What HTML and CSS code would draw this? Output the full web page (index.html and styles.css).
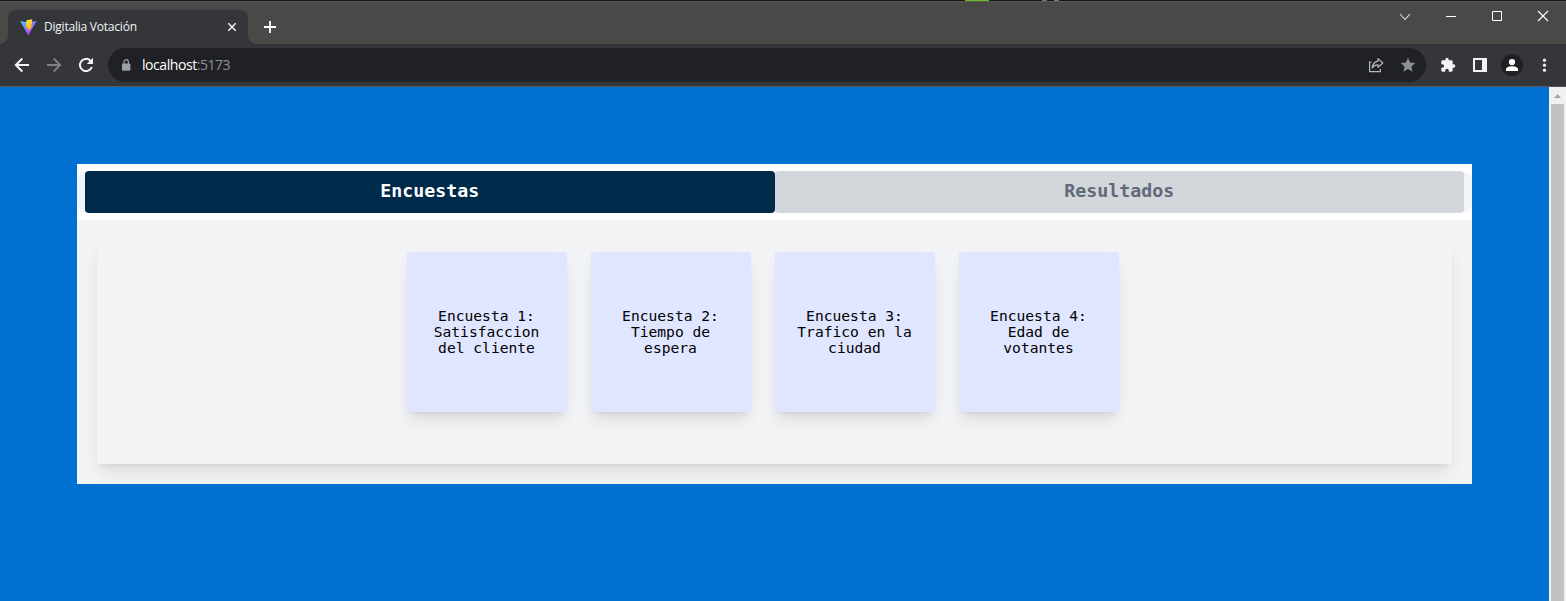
FILE: index.html
```html
<!DOCTYPE html>
<html lang="es">
<head>
<meta charset="utf-8">
<title>Digitalia Votación</title>
<link rel="stylesheet" href="styles.css">
</head>
<body>
<div class="browser">
  <div class="edge"><i class="edge-green"></i><i class="edge-dot"></i><i class="edge-dot edge-dot-last"></i></div>
  <header class="titlebar">
    <div class="browser-tab">
      <svg class="favicon" width="17" height="17" viewBox="0 0 17 17">
        <defs>
          <linearGradient id="v" x1="0" y1="0" x2=".6" y2="1"><stop offset="0" stop-color="#41d1ff"/><stop offset="1" stop-color="#bd34fe"/></linearGradient>
          <linearGradient id="b" x1="0" y1="0" x2="0" y2="1"><stop offset="0" stop-color="#ffe14a"/><stop offset="1" stop-color="#ffa800"/></linearGradient>
        </defs>
        <path d="M0 2 8.5 3.4 16.5 2 8.3 16.5Z" fill="url(#v)"/>
        <path d="M12.2 .2 6.4 1.2 5.8 8.6 7.8 8.2 7.4 10.4 8.8 10.2 8.2 13 12.6 6.2 10.8 6.4 12 4Z" fill="url(#b)"/>
      </svg>
      <span class="tab-title">Digitalia Votación</span>
      <svg class="tab-close" width="10" height="10" viewBox="0 0 10 10"><path d="M1.3 1.3 8.7 8.7M8.7 1.3 1.3 8.7" stroke="#f1f1f1" stroke-width="1.5"/></svg>
    </div>
    <svg class="new-tab" width="14" height="14" viewBox="0 0 14 14"><path d="M7 1V13M1 7H13" stroke="#fff" stroke-width="1.8"/></svg>
    <div class="window-controls">
      <svg width="46" height="30" viewBox="0 0 46 30"><path d="M18 12 23 17.5 28 12" fill="none" stroke="#e4e3e3" stroke-width="1.1"/></svg>
      <svg width="46" height="30" viewBox="0 0 46 30"><path d="M18 14.5H28" stroke="#fff"/></svg>
      <svg width="46" height="30" viewBox="0 0 46 30"><path d="M18.5 9.5H27.5V18.5H18.5Z" fill="none" stroke="#fff"/></svg>
      <svg width="46" height="30" viewBox="0 0 46 30"><path d="M18 9 28 19M28 9 18 19" stroke="#fff" stroke-width="1.1"/></svg>
    </div>
  </header>
  <nav class="toolbar">
    <svg class="nav-icon" width="16" height="16" viewBox="0 0 16 16"><path d="M15 8H2M8.3 1.5 1.8 8 8.3 14.5" fill="none" stroke="#f1f3f4" stroke-width="2"/></svg>
    <svg class="nav-icon" width="16" height="16" viewBox="0 0 16 16"><path d="M1 8H14M7.7 1.5 14.2 8 7.7 14.5" fill="none" stroke="#808184" stroke-width="1.8"/></svg>
    <svg class="nav-icon" width="16" height="16" viewBox="0 0 16 16"><path d="M13.8 10A6.1 6.1 0 1 1 12.4 3.7L14 5.4" fill="none" stroke="#f1f3f4" stroke-width="2"/><path d="M15 .8V7H8.8Z" fill="#f1f3f4"/></svg>
    <div class="address">
      <svg width="10" height="12" viewBox="0 0 10 12"><rect x="1" y="4.4" width="8.4" height="7.4" rx="1" fill="#9aa0a6"/><path d="M3 5V2.9a2.2 2.2 0 0 1 4.4 0V5" fill="none" stroke="#9aa0a6" stroke-width="1.2"/></svg>
      <span class="url">localhost<span class="port">:5173</span></span>
      <svg class="share" width="16" height="16" viewBox="0 0 16 16" fill="none" stroke="#b4b7bb" stroke-width="1.2"><path d="M3.5 5.2H1.6V14.6H12.4V12"/><path d="M10 1.6 14.8 6 10 10.3V7.9C7.4 7.8 5.6 8.7 4.2 10.9 4.6 6.9 6.5 4.6 10 4.1Z" stroke-linejoin="round"/></svg>
      <svg class="star" width="16" height="16" viewBox="0 0 16 16"><path d="M8 .8 10.1 5.6 15.3 6.1 11.4 9.6 12.5 14.8 8 12 3.5 14.8 4.6 9.6.7 6.1 5.9 5.6Z" fill="#8d9196"/></svg>
    </div>
    <div class="actions">
      <svg width="16" height="16" viewBox="0 0 24 24"><path fill="#f1f3f4" d="M20.5 11H19V7a2 2 0 0 0-2-2h-4V3.5a2.5 2.5 0 0 0-5 0V5H4a2 2 0 0 0-2 2v3.8h1.5a2.7 2.7 0 0 1 0 5.4H2V20a2 2 0 0 0 2 2h3.8v-1.5a2.7 2.7 0 0 1 5.4 0V22H17a2 2 0 0 0 2-2v-4h1.5a2.5 2.5 0 0 0 0-5Z"/></svg>
      <svg width="16" height="16" viewBox="0 0 16 16"><path fill="#f1f3f4" fill-rule="evenodd" d="M1 1H15V15H1ZM3 3V13H10V3Z"/></svg>
      <svg class="avatar" width="22" height="22" viewBox="0 0 22 22"><circle cx="11" cy="11" r="11" fill="#202124"/><circle cx="11" cy="8" r="3.1" fill="#fff"/><path d="M5 17V15.2C5 13.2 8.2 12.2 11 12.2S17 13.2 17 15.2V17Z" fill="#fff"/></svg>
      <svg width="16" height="16" viewBox="0 0 16 16" fill="#f1f3f4"><circle cx="8.5" cy="3.2" r="1.6"/><circle cx="8.5" cy="8.2" r="1.6"/><circle cx="8.5" cy="13.2" r="1.6"/></svg>
    </div>
  </nav>
  <div class="viewport">
    <main class="page">
      <section class="panel">
        <div class="tabs-wrap">
          <div class="tabs">
            <div class="tab tab-active">Encuestas</div>
            <div class="tab">Resultados</div>
          </div>
        </div>
        <div class="content">
          <div class="surveys">
            <article class="card">Encuesta 1: Satisfaccion del cliente</article>
            <article class="card">Encuesta 2: Tiempo de espera</article>
            <article class="card">Encuesta 3: Trafico en la ciudad</article>
            <article class="card">Encuesta 4: Edad de votantes</article>
          </div>
        </div>
      </section>
    </main>
    <aside class="scrollbar">
      <svg width="17" height="17" viewBox="0 0 17 17"><path d="M5 11 8.5 7 12 11Z" fill="#a3a3a3"/></svg>
      <div class="thumb"></div>
    </aside>
  </div>
</div>
</body>
</html>
```
FILE: styles.css
```css
* { box-sizing: border-box; }
body { margin: 0; overflow: hidden; }
svg { display: block; flex: none; }
.browser { width: 1566px; height: 601px; display: flex; flex-direction: column; font-family: "Open Sans", "Noto Sans", sans-serif; }
.edge { height: 1px; background: #161414; display: flex; padding-left: 965px; }
.edge-green { width: 24px; background: #69bd20; }
.edge-dot { width: 5px; margin-left: 53px; background: #777; }
.edge-dot-last { margin-left: 7px; }
.titlebar { height: 43px; background: #4b4947; border-top: 1px solid #5b5956; display: flex; padding-left: 8px; }
.browser-tab { position: relative; width: 240px; height: 34px; margin-top: 8px; padding: 0 11px 0 12px; background: #35363a; border-radius: 8px 8px 0 0; display: flex; align-items: center; }
.browser-tab::before, .browser-tab::after { content: ""; position: absolute; bottom: 0; width: 8px; height: 8px; }
.browser-tab::before { left: -8px; background: radial-gradient(circle at 0 0, transparent 7.5px, #35363a 8px); }
.browser-tab::after { right: -8px; background: radial-gradient(circle at 100% 0, transparent 7.5px, #35363a 8px); }
.favicon { margin-right: 7px; }
.tab-title { font-size: 12px; line-height: 16px; letter-spacing: -0.22px; color: #f1f3f4; white-space: nowrap; }
.tab-close { margin-left: auto; }
.new-tab { margin: 18px 0 0 15px; }
.window-controls { margin-left: auto; display: flex; }
.toolbar { height: 43px; flex: none; background: #35363a; border-bottom: 1px solid #59595b; display: flex; align-items: center; padding: 0 14px; }
.nav-icon { margin-right: 16px; }
.address { width: 1318px; height: 34px; margin-left: -2px; border-radius: 17px; background: #202124; display: flex; align-items: center; padding: 0 10px 0 13px; }
.url { margin-left: 11px; font-size: 14px; line-height: 20px; letter-spacing: -0.44px; color: #fff; }
.port { color: #8f9296; }
.share { margin-left: auto; }
.star { margin-left: 16px; }
.actions { display: flex; align-items: center; margin-left: 14px; gap: 16px; }
.avatar { margin: 0 -3px; }
.viewport { flex: 1; display: flex; min-height: 0; }
.page { flex: 1; background: #0071d0; padding: 77px; }
.panel { height: 320px; background: #fff; display: flex; flex-direction: column; }
.tabs-wrap { height: 56px; padding: 8px 0; }
.tabs { height: 40px; padding: 0 8px; background: #f1f5f9; border-radius: 8px; display: flex; align-items: center; }
.tab { flex: 1; height: 42px; border-radius: 4px; background: #d3d6db; color: #5f6978; font: bold 18.27px/40px "DejaVu Sans Mono", monospace; text-align: center; }
.tab-active { background: #002a49; color: #fff; }
.content { flex: 1; background: #f2f3f5; padding: 20px; overflow: hidden; border-radius: 0 0 2px 2px; }
.surveys { height: 224px; background: #f2f3f5; display: flex; justify-content: center; gap: 24px; padding: 12px 24px 0 0; box-shadow: 0 10px 15px -3px rgba(0,0,0,.1), 0 4px 6px -4px rgba(0,0,0,.1); }
.card { width: 160px; height: 160px; padding: 0 20px; display: flex; align-items: center; justify-content: center; text-align: center; background: #e0e6ff; color: #000; font: 14.62px/16px "DejaVu Sans Mono", monospace; box-shadow: 0 10px 15px -3px rgba(0,0,0,.1), 0 4px 6px -4px rgba(0,0,0,.1); }
.scrollbar { width: 17px; flex: none; background: #f1f1f1; display: flex; flex-direction: column; }
.thumb { flex: 1; margin: 0 2px; background: #c1c1c1; }
```
